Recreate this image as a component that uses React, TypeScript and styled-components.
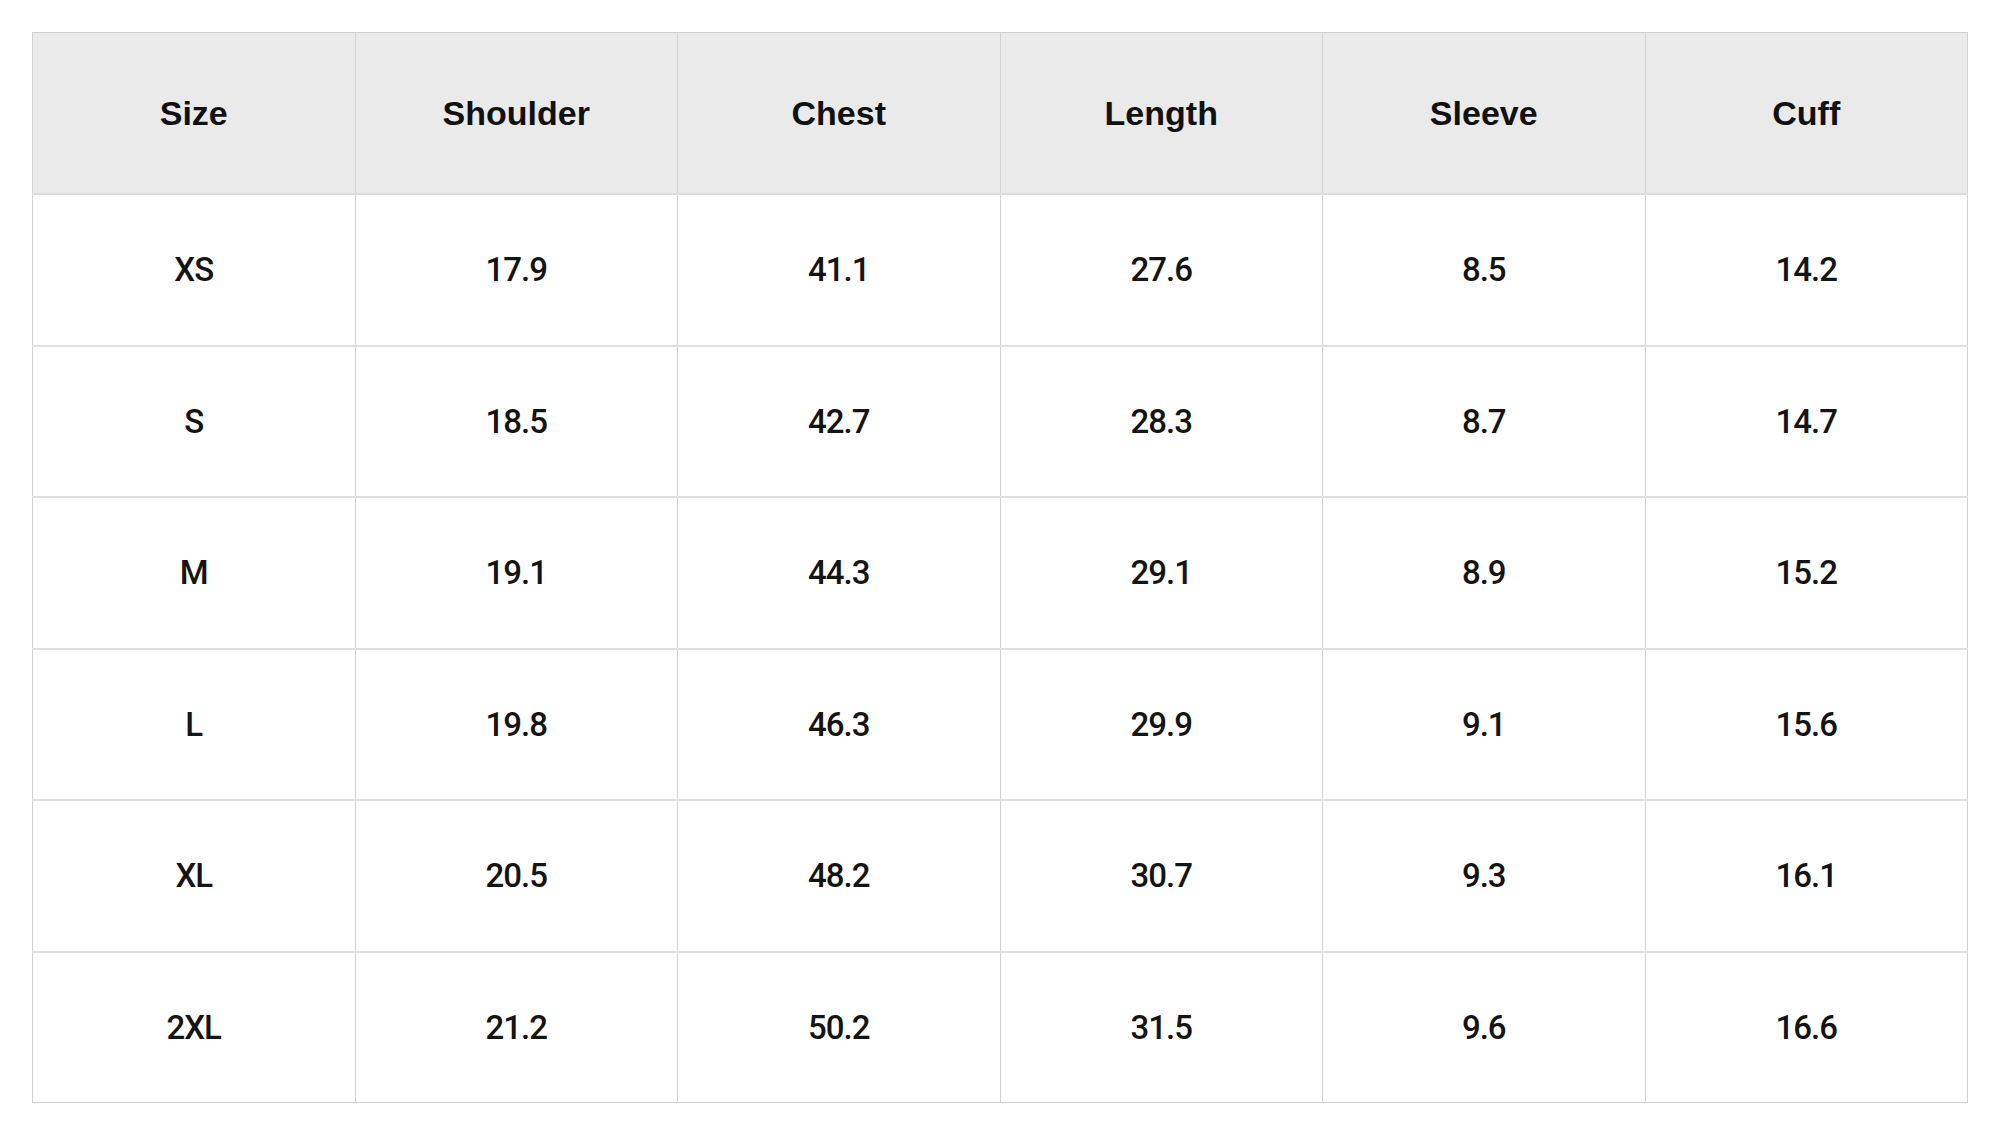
import React from 'react';
import styled, { createGlobalStyle } from 'styled-components';

const GlobalStyle = createGlobalStyle`
  html, body {
    margin: 0;
    padding: 0;
    background: #ffffff;
  }
`;

const Page = styled.div`
  padding: 32px;
  background: #ffffff;
`;

const Table = styled.table`
  width: 100%;
  border-collapse: collapse;
  table-layout: fixed;
  border: 1px solid #d2d2d2;
`;

const HeadCell = styled.th`
  height: 160px;
  padding: 0;
  background: #eaeaea;
  color: #111111;
  font-family: 'Liberation Sans', Arial, sans-serif;
  font-weight: 700;
  font-size: 34px;
  text-align: center;
  vertical-align: middle;
  border-left: 1px solid #d2d2d2;
  border-bottom: 2px solid #dedede;
`;

const Row = styled.tr`
  & + & td {
    border-top: 2px solid #e0e0e0;
  }
`;

const Cell = styled.td`
  height: 149.5px;
  padding: 0;
  color: #141414;
  font-family: Roboto, 'Liberation Sans', Arial, sans-serif;
  font-weight: 500;
  font-size: 33px;
  letter-spacing: -1px;
  text-align: center;
  vertical-align: middle;
  border-left: 1px solid #d2d2d2;
`;

const columns = ['Size', 'Shoulder', 'Chest', 'Length', 'Sleeve', 'Cuff'];

const rows: string[][] = [
  ['XS', '17.9', '41.1', '27.6', '8.5', '14.2'],
  ['S', '18.5', '42.7', '28.3', '8.7', '14.7'],
  ['M', '19.1', '44.3', '29.1', '8.9', '15.2'],
  ['L', '19.8', '46.3', '29.9', '9.1', '15.6'],
  ['XL', '20.5', '48.2', '30.7', '9.3', '16.1'],
  ['2XL', '21.2', '50.2', '31.5', '9.6', '16.6'],
];

export default function App() {
  return (
    <>
      <GlobalStyle />
      <Page>
        <Table>
          <thead>
            <tr>
              {columns.map((c) => (
                <HeadCell key={c}>{c}</HeadCell>
              ))}
            </tr>
          </thead>
          <tbody>
            {rows.map((r) => (
              <Row key={r[0]}>
                {r.map((v, i) => (
                  <Cell key={i}>{v}</Cell>
                ))}
              </Row>
            ))}
          </tbody>
        </Table>
      </Page>
    </>
  );
}
